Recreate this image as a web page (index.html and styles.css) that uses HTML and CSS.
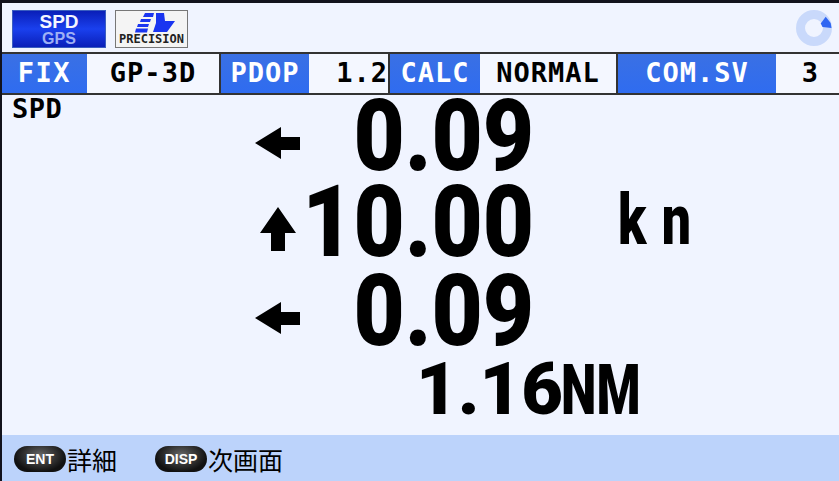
FILE: index.html
```html
<!DOCTYPE html>
<html lang="ja">
<head>
<meta charset="utf-8">
<title>SPD</title>
<link rel="stylesheet" href="styles.css">
</head>
<body>
<div class="screen">
  <header class="top">
    <div class="badge-spd"><span class="b1">SPD</span><span class="b2">GPS</span></div>
    <div class="badge-logo">
      <svg class="logo-mark" viewBox="0 0 40 20" width="40" height="20">
        <path fill="#1a35f0" d="M10 0h9l-1 4H8zM6 6h10l-1 3H5zM3 11h11l-1 3H2zM1 15.500h12l-1 4H0zM21 0h8l1 8h10l-8 11H18l3-9z"/>
      </svg>
      <span class="logo-text">PRECISION</span>
    </div>
    <svg class="spinner" viewBox="0 0 36 36" width="36" height="36">
      <circle cx="18" cy="18" r="13.500" fill="none" stroke="#c9d9fb" stroke-width="9"/>
      <path d="M29.700 6.700L34.700 13 35.500 18 26.500 17 24.700 13.500z" fill="#2f66f2"/>
    </svg>
  </header>
  <div class="status">
    <span class="cell key k-fix">FIX</span><span class="cell val v-fix">GP-3D</span>
    <span class="cell key k-pdop">PDOP</span><span class="cell val v-pdop">1.2</span>
    <span class="cell key k-calc">CALC</span><span class="cell val v-calc">NORMAL</span>
    <span class="cell key k-com">COM.SV</span><span class="cell val v-com">3</span>
  </div>
  <main class="readout">
    <div class="label">SPD</div>
    <svg class="arrow" viewBox="0 0 46 32" width="46" height="32"><path d="M0 16L26 0v10h19v13H26v9z"/></svg>
    <span class="num">0.09</span>
    <span class="spacer"></span>

    <span class="spacer"></span>
    <svg class="arrow up" viewBox="0 0 36 44" width="36" height="44"><path d="M18 0l18 26H25v18H11V26H0z"/></svg>
    <span class="num">10.00</span>
    <span class="unit">kn</span>

    <span class="spacer"></span>
    <svg class="arrow" viewBox="0 0 46 32" width="46" height="32"><path d="M0 16L26 0v10h19v13H26v9z"/></svg>
    <span class="num">0.09</span>
    <span class="spacer"></span>

    <div class="total"><span class="small">1.16</span><span class="nm">NM</span></div>
  </main>
  <footer class="foot">
    <span class="pill">ENT</span><span class="hint">詳細</span>
    <span class="pill disp">DISP</span><span class="hint">次画面</span>
  </footer>
</div>
</body>
</html>
```
FILE: styles.css
```css
* { box-sizing: border-box; }
html, body { margin: 0; padding: 0; background: #f0f4ff; }
.screen {
  width: 839px; height: 481px; overflow: hidden; display: flex; flex-direction: column;
  border-top: 3px solid #12121c; border-left: 2px solid #12121c; background: #f0f4ff;
  color: #000; font-family: "Roboto", "Liberation Sans", sans-serif;
}
.top { height: 49px; flex: none; padding: 7px 7px 0 10px; display: flex; align-items: flex-start; gap: 9px; }
.badge-spd {
  width: 94px; height: 38px; display: flex; flex-direction: column; align-items: center; justify-content: center;
  background: linear-gradient(#0a1fb8, #1a40ee 50%, #0a1fb8); border: 1px solid #3a5ec0;
  font-family: "Liberation Sans", sans-serif; font-weight: 700;
}
.b1 { color: #f4f6ff; font-size: 19px; line-height: 18px; }
.b2 { color: #9eb0f5; font-size: 16px; line-height: 15px; }
.badge-logo {
  width: 73px; height: 38px; border: 1px solid #777; background: #f4f4f4;
  display: flex; flex-direction: column; align-items: center; padding-top: 2px;
}
.logo-mark { display: block; margin-left: 6px; }
.logo-text { font-family: "DejaVu Sans Mono", monospace; font-weight: 700; font-size: 12px; line-height: 12px; color: #222; }
.spinner { margin-left: auto; }
.status {
  height: 43px; flex: none; display: flex; border-top: 2px solid #333; border-bottom: 2px solid #333; background: #f4f7ff;
  font-family: "DejaVu Sans Mono", monospace; font-weight: 700; font-size: 27px; line-height: 38px;
}
.cell { display: block; height: 39px; text-align: center; white-space: nowrap; letter-spacing: 1px; }
.key { background: linear-gradient(#3a70e4, #2f6cf0); color: #fff; }
.val { color: #000; }
.k-fix { width: 85px; letter-spacing: 1.500px; }
.v-fix { width: 134px; border-right: 2px solid #333; }
.k-pdop { width: 88px; }
.v-pdop { width: 81px; border-right: 2px solid #333; text-align: right; padding-right: 0; }
.k-calc { width: 90px; }
.v-calc { width: 138px; border-right: 2px solid #333; }
.k-com { width: 158px; }
.v-com { flex: 1; padding-left: 6px; }
.readout {
  flex: none; height: 342px; margin-top: -2px; display: grid;
  grid-template-columns: 253px 46px 233px 1fr;
  grid-template-rows: 86px 86px 92px 66px;
  align-items: center;
}
.label { align-self: start; margin-top: 2px; font-family: "DejaVu Sans Mono", monospace; font-weight: 700; font-size: 27px; line-height: 28px; padding-left: 10px; letter-spacing: .500px; }
.arrow { display: block; justify-self: start; margin-top: 14px; }
.arrow.up { margin-left: 5px; }
.num {
  justify-self: end; font-weight: 900; font-size: 100px; line-height: 80px; white-space: nowrap;
  transform: scaleX(.885); transform-origin: right center;
}
.unit {
  justify-self: start; margin: 0 0 5px 84px; font-weight: 900; font-size: 70px; line-height: 60px;
  letter-spacing: 21px; transform: scaleX(.74); transform-origin: left center;
}
.total { grid-column: 1 / -1; display: flex; align-items: baseline; padding-left: 414px; white-space: nowrap; }
.small { font-weight: 900; font-size: 72px; line-height: 60px; width: 145px; display: block; }
.nm { font-weight: 900; font-size: 70px; line-height: 60px; transform: scaleX(.72); transform-origin: left center; display: block; }
.foot { flex: 1; background: #bcd3fb; display: flex; align-items: center; padding: 2px 0 0 12px; font-size: 25px; font-family: "Noto Sans CJK JP", sans-serif; }
.pill {
  width: 52px; height: 26px; border-radius: 13px; background: radial-gradient(ellipse at 50% 35%, #666, #111 70%);
  color: #fff; font: 700 14px/26px "Liberation Sans", sans-serif; text-align: center;
}
.disp { margin-left: 38px; }
.hint { line-height: 28px; margin-left: 1px; }
```
